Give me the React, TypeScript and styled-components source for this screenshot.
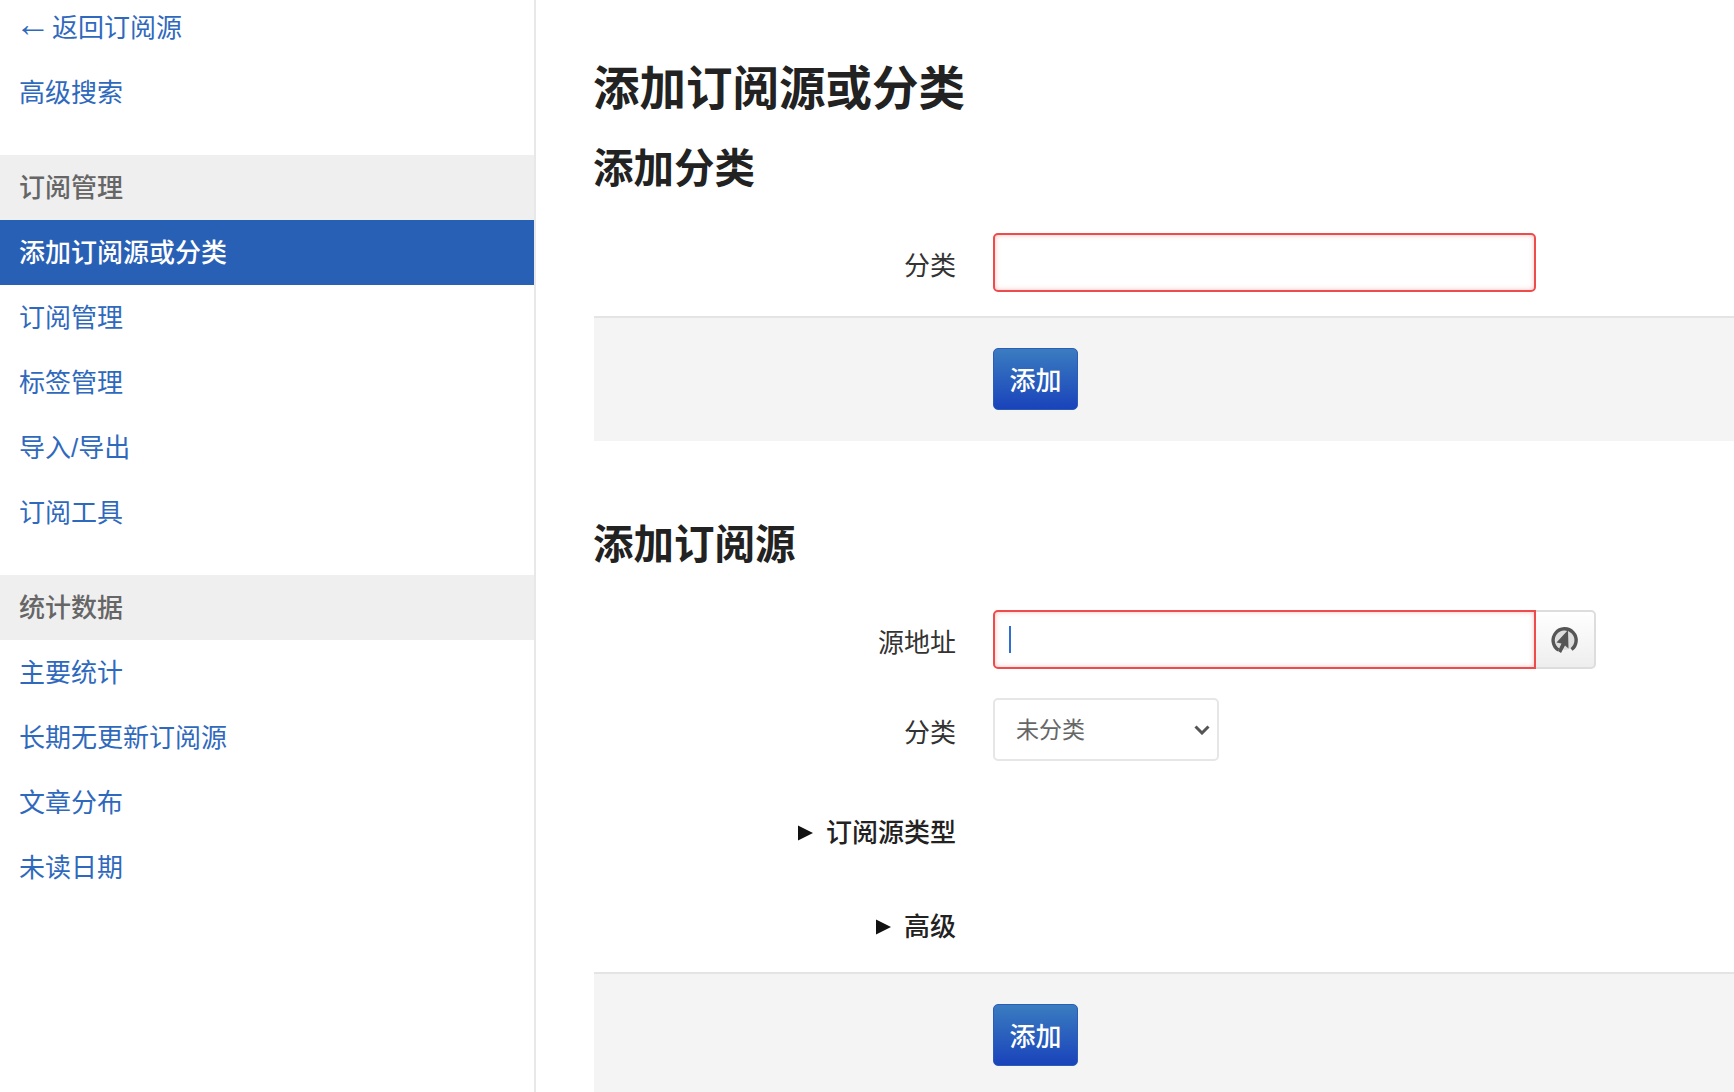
import React from 'react';
import styled, { createGlobalStyle } from 'styled-components';

const GlobalStyle = createGlobalStyle`
	html, body {
		margin: 0;
		padding: 0;
		background: #fff;
		overflow: hidden;
	}
	body {
		font-family: 'Liberation Sans', 'Noto Sans CJK SC', sans-serif;
		color: #222;
	}
`;

const Page = styled.div`
	display: flex;
	width: 1734px;
	height: 1092px;
	overflow: hidden;
`;

const Sidebar = styled.nav`
	flex: 0 0 534px;
	border-right: 2px solid #e8e8e8;
	display: flex;
	flex-direction: column;
	margin-top: -5px;
`;

const Group = styled.div`
	display: flex;
	flex-direction: column;
	margin-bottom: 30px;
`;

const NavItem = styled.a<{ $active?: boolean }>`
	box-sizing: border-box;
	height: 65px;
	display: flex;
	align-items: center;
	padding: 0 0 4px 19px;
	font-size: 26px;
	text-decoration: none;
	color: ${(p) => (p.$active ? '#fff' : '#2f69bd')};
	background: ${(p) => (p.$active ? '#2860b6' : 'transparent')};
	font-weight: ${(p) => (p.$active ? 500 : 400)};
`;

const NavHead = styled.div`
	box-sizing: border-box;
	height: 65px;
	display: flex;
	align-items: center;
	padding: 0 0 4px 19px;
	font-size: 26px;
	font-weight: 500;
	color: #666;
	background: #efefef;
`;

const Arrow = styled.span`
	font-size: 36px;
	line-height: 1;
	margin: -3px 1px 0 -4px;
`;

const Main = styled.main`
	flex: 1;
	min-width: 0;
	padding: 54px 0 0 58px;
`;

const Title = styled.h1`
	margin: 0 0 0 -1px;
	font-size: 46.5px;
	line-height: 70px;
	font-weight: 700;
	color: #222;
`;

const SectionTitle = styled.h2<{ $first?: boolean }>`
	margin: ${(p) => (p.$first ? '12px' : '71px')} 0 0 -1px;
	font-size: 40.5px;
	line-height: 66px;
	font-weight: 700;
	color: #222;
`;

const Row = styled.div<{ $top: number }>`
	display: grid;
	grid-template-columns: 362px auto;
	column-gap: 37px;
	align-items: center;
	justify-content: start;
	margin-top: ${(p) => p.$top}px;
`;

const Label = styled.label`
	padding-top: 2px;
	font-size: 26px;
	color: #333;
	text-align: right;
`;

const InputGroup = styled.div`
	position: relative;
	display: flex;
`;

const TextInput = styled.input<{ $joined?: boolean }>`
	box-sizing: border-box;
	width: 543px;
	height: 59px;
	padding: 0 16px;
	background: #fff;
	border: 2px solid #ec4c4c;
	border-radius: ${(p) => (p.$joined ? '5px 0 0 5px' : '5px')};
	box-shadow: inset 0 0 5px rgba(236, 76, 76, 0.35);
	outline: none;
	font-size: 26px;
`;

const Caret = styled.span`
	position: absolute;
	left: 16px;
	top: 16px;
	width: 2px;
	height: 27px;
	background: #2f6fd0;
`;

const LookButton = styled.button`
	box-sizing: border-box;
	width: 60px;
	height: 59px;
	padding: 0;
	display: flex;
	align-items: center;
	justify-content: center;
	background: linear-gradient(to bottom, #fff, #eee);
	border: 2px solid #ddd;
	border-left: none;
	border-radius: 0 5px 5px 0;
`;

const Select = styled.select`
	box-sizing: border-box;
	width: 226px;
	height: 63px;
	padding: 0 16px 0 21px;
	appearance: none;
	background: #fff
		url("data:image/svg+xml,%3Csvg xmlns='http://www.w3.org/2000/svg' width='16' height='10' viewBox='0 0 16 10'%3E%3Cpath d='M1.5 1.5 8 8l6.5-6.5' fill='none' stroke='%23555' stroke-width='3'/%3E%3C/svg%3E")
		no-repeat right 7px center;
	border: 2px solid #e6e6e6;
	border-radius: 5px;
	font-family: inherit;
	font-size: 23px;
	color: #666;
	outline: none;
`;

const Summary = styled.div<{ $top: number }>`
	width: 362px;
	display: flex;
	align-items: center;
	justify-content: flex-end;
	margin-top: ${(p) => p.$top}px;
	font-size: 26px;
	line-height: 36px;
	font-weight: 500;
	color: #222;
`;

const Triangle = styled.svg`
	width: 16px;
	height: 16px;
	margin-right: 13px;
`;

const Footer = styled.div<{ $top: number }>`
	margin-top: ${(p) => p.$top}px;
	height: 125px;
	padding: 30px 0 0 399px;
	box-sizing: border-box;
	background: #f4f4f4;
	border-top: 2px solid #e4e4e4;
`;

const SubmitButton = styled.button`
	box-sizing: border-box;
	width: 85px;
	height: 62px;
	padding: 0 0 2px;
	font-family: inherit;
	font-size: 26px;
	font-weight: 500;
	color: #fff;
	background: linear-gradient(to bottom, #3a7cc0, #1a43bb);
	border: 1px solid #2a5cb8;
	border-radius: 5px;
`;

const LookIcon = () => (
	<svg width='30' height='30' viewBox='0 0 30 30'>
		<circle cx='15' cy='15' r='10' fill='#ddd' />
		<path d='M8.5 25A11.5 11.5 0 1 1 21.5 24.5' fill='none' stroke='#555' strokeWidth='3.4' />
		<path d='M18 5 18.5 23.5 15 20.5 11 28 8 26 11.5 18.5 6.5 17.5z' fill='#555' />
	</svg>
);

const TriangleIcon = () => (
	<Triangle viewBox='0 0 16 16'>
		<path d='M1 0.5 16 8 1 15.5z' fill='#111' />
	</Triangle>
);

const manageLinks = ['订阅管理', '标签管理', '导入/导出', '订阅工具'];
const statsLinks = ['主要统计', '长期无更新订阅源', '文章分布', '未读日期'];

const App = () => (
	<Page>
		<GlobalStyle />
		<Sidebar>
			<Group>
				<NavItem href='#'>
					<Arrow>←</Arrow>返回订阅源
				</NavItem>
				<NavItem href='#'>高级搜索</NavItem>
			</Group>
			<Group>
				<NavHead>订阅管理</NavHead>
				<NavItem href='#' $active>
					添加订阅源或分类
				</NavItem>
				{manageLinks.map((l) => (
					<NavItem href='#' key={l}>
						{l}
					</NavItem>
				))}
			</Group>
			<Group>
				<NavHead>统计数据</NavHead>
				{statsLinks.map((l) => (
					<NavItem href='#' key={l}>
						{l}
					</NavItem>
				))}
			</Group>
		</Sidebar>
		<Main>
			<Title>添加订阅源或分类</Title>
			<SectionTitle $first>添加分类</SectionTitle>
			<Row $top={31}>
				<Label>分类</Label>
				<TextInput />
			</Row>
			<Footer $top={24}>
				<SubmitButton>添加</SubmitButton>
			</Footer>
			<SectionTitle>添加订阅源</SectionTitle>
			<Row $top={32}>
				<Label>源地址</Label>
				<InputGroup>
					<TextInput $joined />
					<Caret />
					<LookButton>
						<LookIcon />
					</LookButton>
				</InputGroup>
			</Row>
			<Row $top={29}>
				<Label>分类</Label>
				<Select defaultValue='0'>
					<option value='0'>未分类</option>
				</Select>
			</Row>
			<Summary $top={54}>
				<TriangleIcon />
				订阅源类型
			</Summary>
			<Summary $top={58}>
				<TriangleIcon />
				高级
			</Summary>
			<Footer $top={27}>
				<SubmitButton>添加</SubmitButton>
			</Footer>
		</Main>
	</Page>
);

export default App;
